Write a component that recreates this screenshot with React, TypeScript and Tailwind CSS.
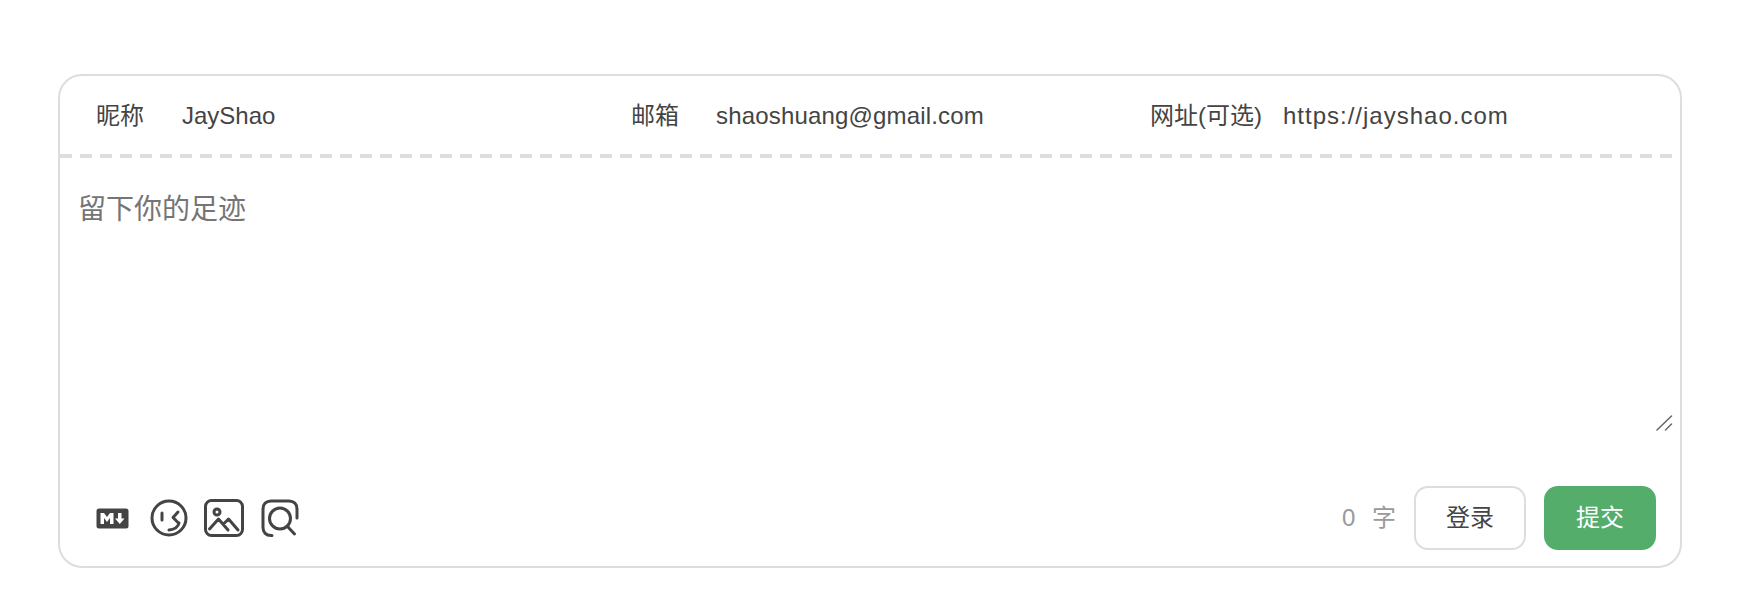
export default function App() {
  return (
    <div className="bg-white w-[1764px] h-[616px] pt-[74px] pl-[58px] font-['Liberation_Sans','Noto_Sans_CJK_SC',sans-serif] text-[#444]">
      <div className="w-[1624px] h-[494px] border-2 border-[#ddd] rounded-[24px] flex flex-col overflow-hidden">
        <div className="flex h-[78px] pt-[1px] shrink-0 text-[24px]">
          <div className="w-[571px] flex items-center pl-[36px]">
            <label className="w-[86px] shrink-0">昵称</label>
            <input readOnly value="JayShao" className="flex-1 min-w-0 outline-none text-[#444]" />
          </div>
          <div className="w-[518px] flex items-center">
            <label className="w-[85px] shrink-0">邮箱</label>
            <input readOnly value="shaoshuang@gmail.com" className="flex-1 min-w-0 outline-none text-[#444] tracking-[0.17px]" />
          </div>
          <div className="flex-1 flex items-center">
            <label className="w-[134px] shrink-0 pl-[1px]">网址(可选)</label>
            <input readOnly value="https://jayshao.com" className="flex-1 min-w-0 outline-none text-[#444] tracking-[1px]" />
          </div>
        </div>
        <div className="h-[4px] shrink-0 bg-[repeating-linear-gradient(90deg,#ddd_0,#ddd_12px,transparent_12px,transparent_20px)]" />
        <div className="relative h-[273px] shrink-0">
          <textarea
            placeholder="留下你的足迹"
            className="w-full h-full px-[18px] pt-[34px] text-[28px] leading-[36px] outline-none resize-none placeholder:text-[#757575] block"
          />
          <svg width="17" height="16" viewBox="0 0 17 16" className="absolute right-[7px] bottom-[0px]" stroke="#666" strokeWidth="1.500" strokeLinecap="round">
            <path d="M1 15L15.500 1" />
            <path d="M9.500 15L15.500 9" />
          </svg>
        </div>
        <div className="mt-auto flex items-center justify-between pl-[36px] pr-[24px] pb-[16px]">
          <div className="flex items-center">
            <svg width="33" height="21" viewBox="0 0 33 21" className="mr-[20px]">
              <rect x="0.500" y="0.500" width="32" height="20" rx="2.500" fill="#444" />
              <path d="M4.500 16V5h3.500l3 4 3-4h3.500v11h-3.500v-6l-3 4-3-4v6z" fill="#fff" />
              <path d="M22 5h3.500v5.500h3L23.800 16l-4.800-5.500h3z" fill="#fff" />
            </svg>
            <svg width="40" height="40" viewBox="0 0 40 40" fill="none" stroke="#444" strokeWidth="3" strokeLinecap="round" strokeLinejoin="round" className="mr-[15px]">
              <circle cx="20" cy="20" r="17" />
              <path d="M13 15v7" />
              <path d="M29 14l-5 5.500 5 5" />
              <path d="M20 32c5-.5 9-2.500 10-7" />
            </svg>
            <svg width="40" height="38" viewBox="0 0 40 38" fill="none" stroke="#444" strokeWidth="3" strokeLinecap="round" strokeLinejoin="round" className="mr-[17px]">
              <rect x="1.500" y="1.500" width="37" height="35" rx="6" />
              <circle cx="13" cy="13" r="3" />
              <path d="M5.500 30l9-10 9.500 11M19.500 25l5-5 9.500 11" />
            </svg>
            <svg width="38" height="38" viewBox="0 0 38 38" fill="none" stroke="#444" strokeWidth="3" strokeLinecap="round">
              <path d="M11 36.500H10c-5 0-8-3-8-8V10c0-5 3-8 8-8h18c5 0 8 3 8 8v9" />
              <circle cx="19" cy="19.500" r="10.500" />
              <path d="M27 28l6.500 7" />
            </svg>
          </div>
          <div className="flex items-center">
            <span className="text-[24px] text-[#999] w-[30px]">0</span>
            <span className="text-[24px] text-[#999] w-[42px]">字</span>
            <button className="w-[112px] h-[64px] rounded-[14px] border-2 border-[#ddd] bg-white text-[24px] text-[#444] flex items-center justify-center">登录</button>
            <button className="ml-[18px] w-[112px] h-[64px] rounded-[14px] bg-[#55ad6c] text-[24px] text-white flex items-center justify-center">提交</button>
          </div>
        </div>
      </div>
    </div>
  );
}
